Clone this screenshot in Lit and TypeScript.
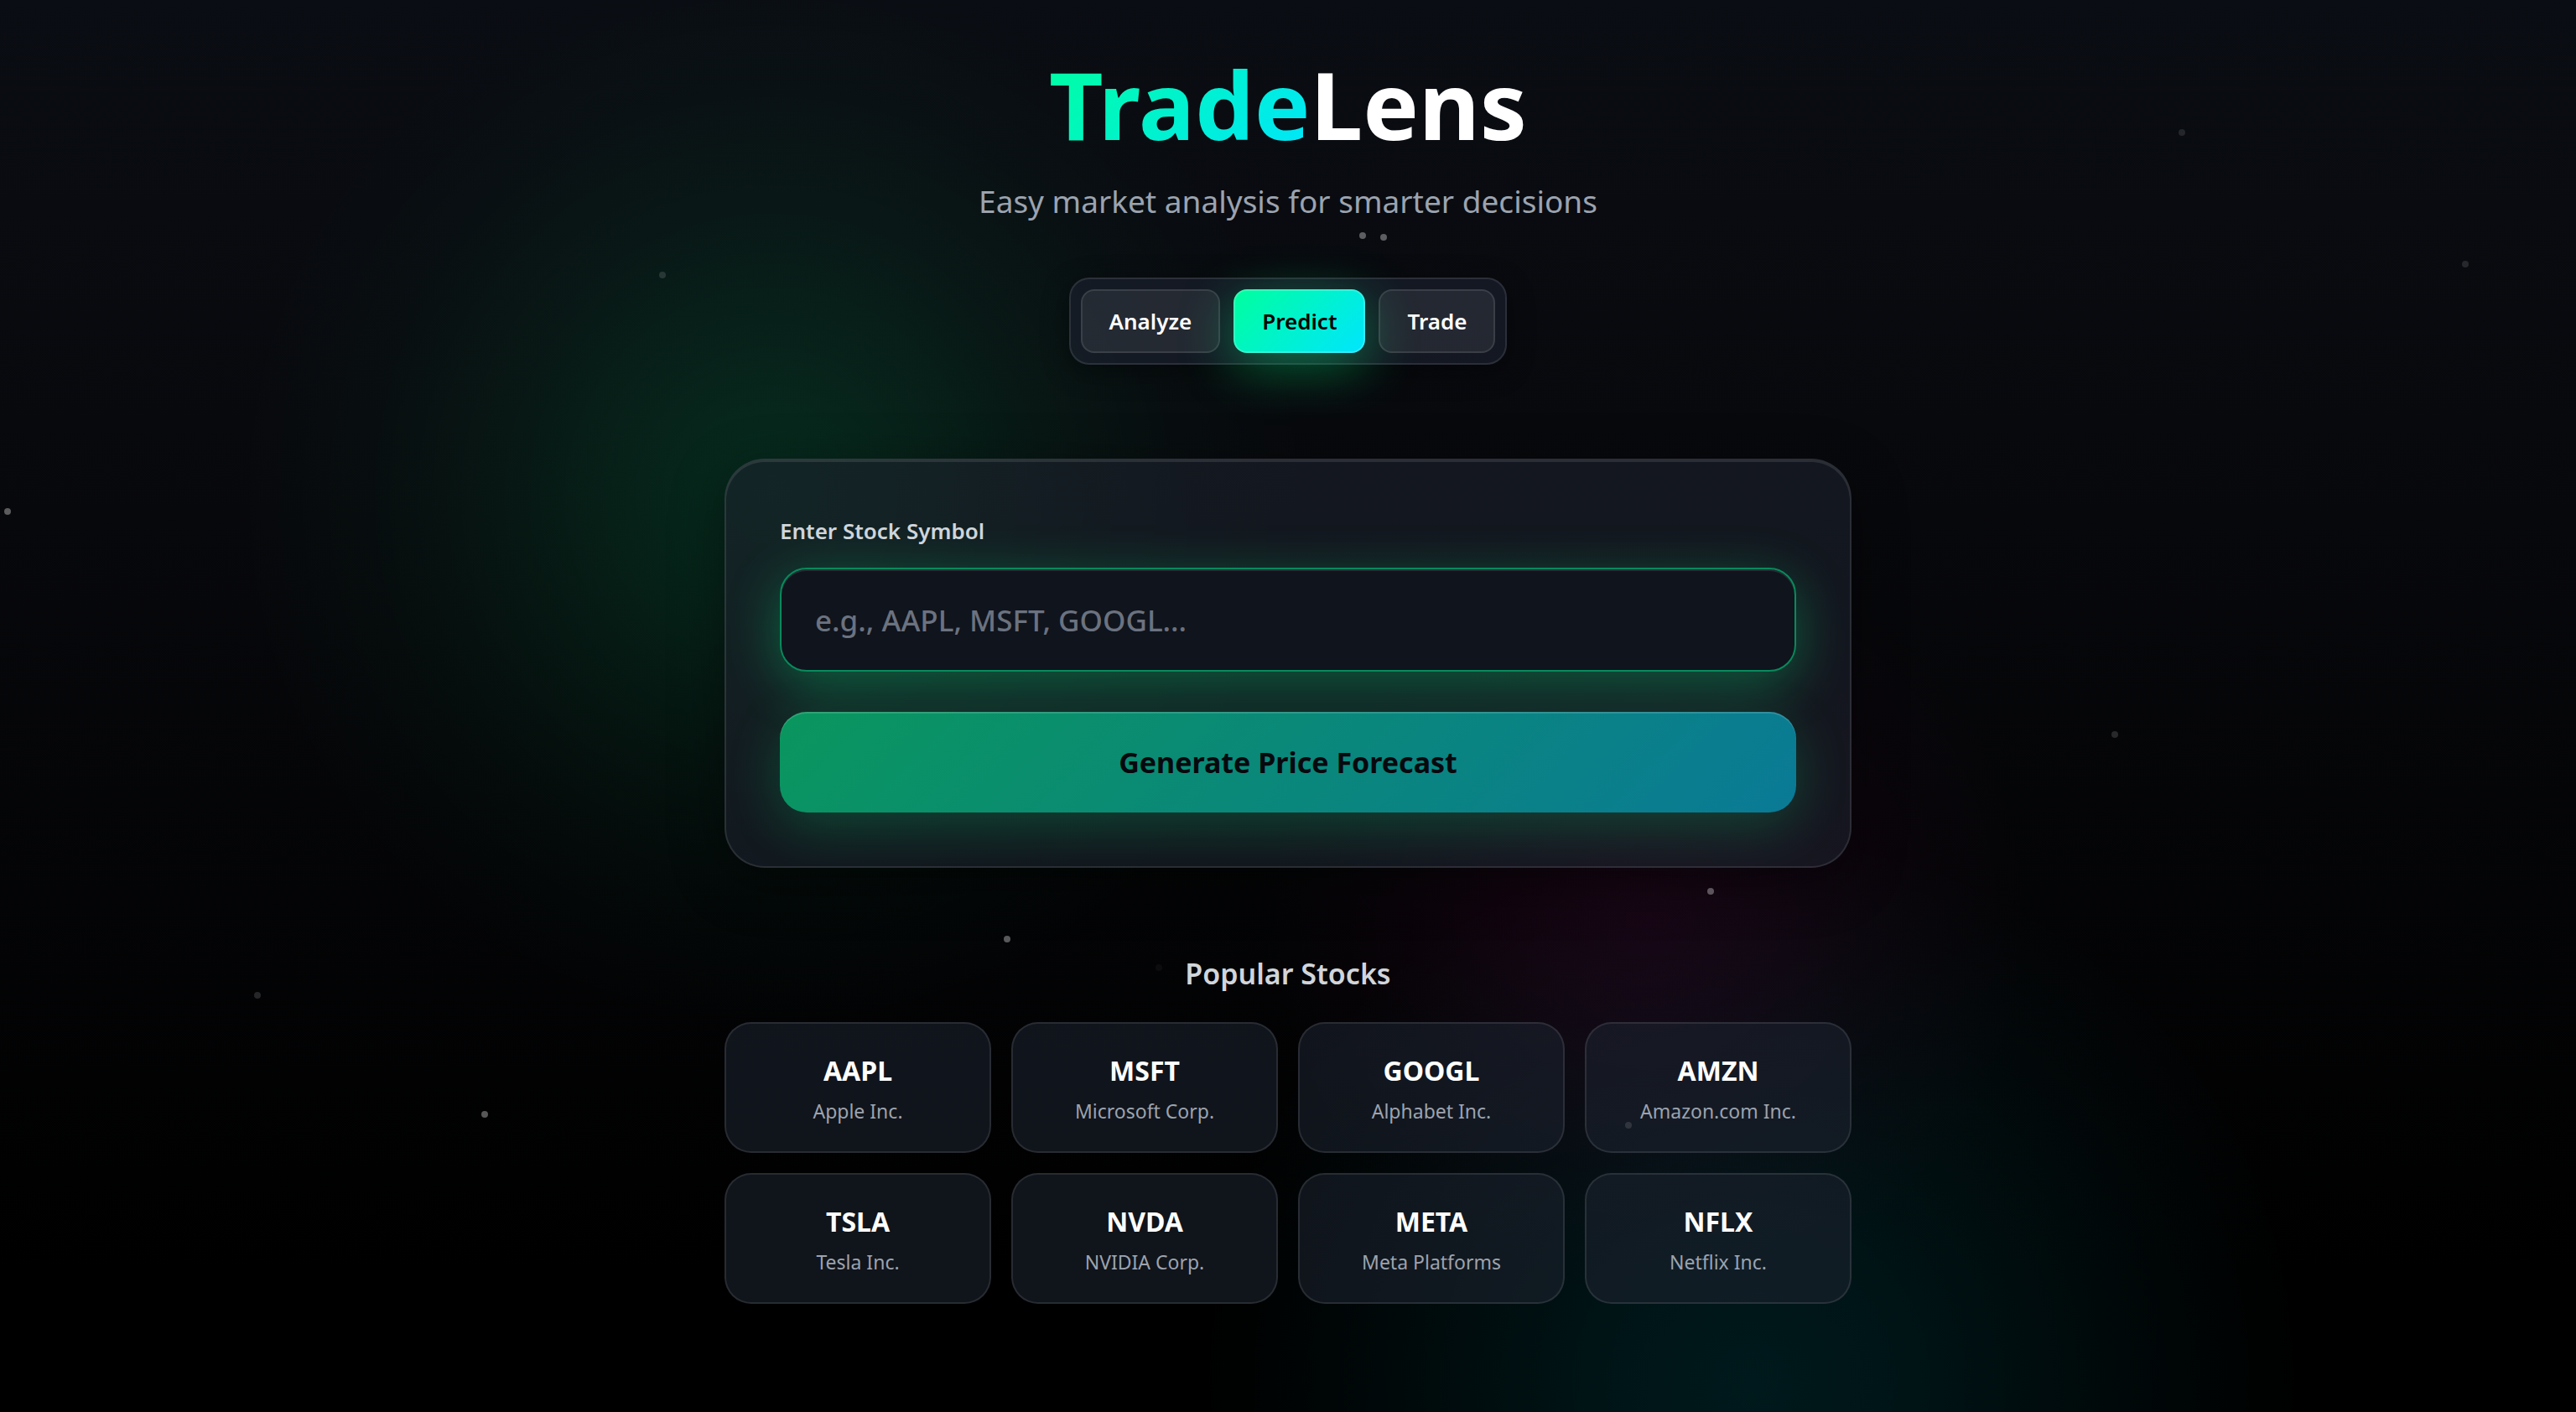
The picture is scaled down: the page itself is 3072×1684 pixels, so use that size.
import { LitElement, html, css } from "lit";
import { customElement, state } from "lit/decorators.js";
import { classMap } from "lit/directives/class-map.js";
import { styleMap } from "lit/directives/style-map.js";

interface Stock {
  symbol: string;
  name: string;
}

/** A floating particle: position in percent of the window, and opacity. */
interface Particle {
  x: number;
  y: number;
  opacity: number;
}

const TABS = ["Analyze", "Predict", "Trade"];

const STOCKS: Stock[] = [
  { symbol: "AAPL", name: "Apple Inc." },
  { symbol: "MSFT", name: "Microsoft Corp." },
  { symbol: "GOOGL", name: "Alphabet Inc." },
  { symbol: "AMZN", name: "Amazon.com Inc." },
  { symbol: "TSLA", name: "Tesla Inc." },
  { symbol: "NVDA", name: "NVIDIA Corp." },
  { symbol: "META", name: "Meta Platforms" },
  { symbol: "NFLX", name: "Netflix Inc." },
];

const PARTICLES: Particle[] = [
  { x: 52.9, y: 16.7, opacity: 0.34 },
  { x: 53.7, y: 16.8, opacity: 0.34 },
  { x: 84.7, y: 9.4, opacity: 0.11 },
  { x: 95.7, y: 18.7, opacity: 0.12 },
  { x: 25.7, y: 19.5, opacity: 0.13 },
  { x: 0.3, y: 36.2, opacity: 0.34 },
  { x: 82.1, y: 52, opacity: 0.14 },
  { x: 66.4, y: 63.1, opacity: 0.32 },
  { x: 39.1, y: 66.5, opacity: 0.34 },
  { x: 45, y: 68.5, opacity: 0.04 },
  { x: 10, y: 70.5, opacity: 0.14 },
  { x: 18.8, y: 78.9, opacity: 0.34 },
  { x: 63.2, y: 79.7, opacity: 0.12 },
];

@customElement("app-root")
export class AppRoot extends LitElement {
  @state() private tab = "Predict";
  @state() private symbol = "";

  static styles = css`
    :host {
      display: block;
      position: relative;
      min-height: 100vh;
      overflow: hidden;
      background: linear-gradient(180deg, #0a0d13 0%, #08090d 30%, #000 90%);
      color: #fff;
      font-family: "Segoe UI", "Noto Sans", "Open Sans", sans-serif;
    }
    *,
    *::before {
      box-sizing: border-box;
    }
    h1,
    h2,
    p {
      margin: 0;
    }
    button,
    input {
      font: inherit;
      color: inherit;
      margin: 0;
    }
    button {
      cursor: pointer;
    }
    .glow {
      position: absolute;
      inset: 0;
      pointer-events: none;
      background:
        radial-gradient(
          circle 640px at 30% 35%,
          rgba(0, 255, 136, 0.14) 0%,
          rgba(0, 255, 136, 0.11) 22%,
          rgba(0, 255, 136, 0.06) 50%,
          rgba(0, 255, 136, 0.02) 76%,
          transparent 100%
        ),
        radial-gradient(
          circle 460px at 64% 65%,
          rgba(255, 0, 170, 0.08) 0%,
          rgba(255, 0, 170, 0.05) 38%,
          rgba(255, 0, 170, 0.02) 68%,
          transparent 100%
        ),
        radial-gradient(
          circle 660px at 68% 98%,
          rgba(0, 229, 255, 0.11) 0%,
          rgba(0, 229, 255, 0.09) 25%,
          rgba(0, 229, 255, 0.05) 55%,
          rgba(0, 229, 255, 0.02) 80%,
          transparent 100%
        );
    }
    .particle {
      position: absolute;
      width: 8px;
      height: 8px;
      margin: -4px;
      border-radius: 50%;
      background: #fff;
      pointer-events: none;
    }
    .page {
      position: relative;
      max-width: 1344px;
      margin: 0 auto;
      padding: 64px 0;
      display: flex;
      flex-direction: column;
      align-items: center;
    }
    .title {
      font-size: 112px;
      line-height: 120px;
      font-weight: 700;
    }
    .accent {
      background: linear-gradient(135deg, #00ff9d, #00e5ff);
      -webkit-background-clip: text;
      background-clip: text;
      color: transparent;
    }
    .subtitle {
      margin-top: 28px;
      font-size: 37px;
      line-height: 56px;
      color: #9ca3af;
    }
    .tabs {
      display: flex;
      gap: 16px;
      margin-top: 63px;
      padding: 12px;
      border: 2px solid rgba(255, 255, 255, 0.1);
      border-radius: 24px;
      background: rgba(28, 34, 48, 0.6);
      box-shadow: 0 8px 32px rgba(0, 0, 0, 0.4);
    }
    .tab {
      padding: 16px 32px;
      border: 2px solid rgba(255, 255, 255, 0.1);
      border-radius: 16px;
      background: rgba(255, 255, 255, 0.07);
      font-size: 26px;
      line-height: 40px;
      font-weight: 600;
    }
    .tab.active {
      background: linear-gradient(135deg, #00ff9d, #00e5ff) border-box;
      border-color: rgba(255, 255, 255, 0.2);
      color: #000;
      box-shadow: 0 16px 64px rgba(0, 255, 136, 0.4);
    }
    .panel {
      width: 100%;
      margin-top: 112px;
      padding: 64px;
      display: flex;
      flex-direction: column;
      border: 2px solid rgba(255, 255, 255, 0.1);
      border-radius: 48px;
      background: rgba(28, 34, 45, 0.6);
      box-shadow:
        0 16px 64px rgba(0, 0, 0, 0.4),
        inset 0 2px 0 rgba(255, 255, 255, 0.1);
    }
    .label {
      font-size: 26px;
      line-height: 40px;
      font-weight: 600;
      color: #d1d5db;
    }
    .field {
      margin-top: 24px;
      height: 124px;
      width: 100%;
      padding: 32px 40px;
      border: 2px solid #088a5c;
      border-radius: 32px;
      background: #10141c;
      outline: none;
      font-size: 35px;
      line-height: 56px;
      font-weight: 500;
      box-shadow:
        0 16px 64px rgba(0, 255, 136, 0.3),
        inset 0 2px 0 rgba(255, 255, 255, 0.1);
    }
    .field::placeholder {
      color: #6b7280;
      opacity: 1;
    }
    .submit {
      margin-top: 48px;
      padding: 32px;
      border: 0;
      border-radius: 32px;
      background: linear-gradient(135deg, #0a965e, #0a7a96);
      color: #07090e;
      font-size: 34px;
      line-height: 56px;
      font-weight: 700;
      box-shadow:
        0 16px 64px rgba(0, 255, 136, 0.2),
        inset 0 2px 0 rgba(255, 255, 255, 0.15);
    }
    .heading {
      margin-top: 98px;
      font-size: 34px;
      line-height: 56px;
      font-weight: 600;
      color: #d1d5db;
    }
    .stocks {
      width: 100%;
      margin-top: 30px;
      display: grid;
      grid-template-columns: repeat(4, 1fr);
      gap: 24px;
    }
    .stock {
      display: flex;
      flex-direction: column;
      align-items: center;
      gap: 8px;
      padding: 32px;
      border: 2px solid rgba(255, 255, 255, 0.1);
      border-radius: 32px;
      background: rgba(27, 33, 45, 0.6);
    }
    .ticker {
      font-size: 32px;
      line-height: 48px;
      font-weight: 700;
    }
    .name {
      font-size: 23px;
      line-height: 32px;
      color: #9ca3af;
    }
  `;

  render() {
    return html`
      <div class="glow"></div>
      <main class="page">
        <h1 class="title"><span class="accent">Trade</span>Lens</h1>
        <p class="subtitle">Easy market analysis for smarter decisions</p>
        <nav class="tabs">
          ${TABS.map(
            (name) => html`<button
              type="button"
              class=${classMap({ tab: true, active: name === this.tab })}
              aria-pressed=${name === this.tab}
              @click=${() => (this.tab = name)}
            >
              ${name}
            </button>`,
          )}
        </nav>
        <form class="panel" @submit=${(e: Event) => e.preventDefault()}>
          <label class="label" for="symbol">Enter Stock Symbol</label>
          <input
            class="field"
            id="symbol"
            type="text"
            autocomplete="off"
            placeholder="e.g., AAPL, MSFT, GOOGL..."
            .value=${this.symbol}
            @input=${(e: InputEvent) =>
              (this.symbol = (e.target as HTMLInputElement).value)}
          />
          <button class="submit" type="submit">Generate Price Forecast</button>
        </form>
        <h2 class="heading">Popular Stocks</h2>
        <div class="stocks">
          ${STOCKS.map(
            (stock) => html`<button
              type="button"
              class="stock"
              @click=${() => (this.symbol = stock.symbol)}
            >
              <span class="ticker">${stock.symbol}</span>
              <span class="name">${stock.name}</span>
            </button>`,
          )}
        </div>
      </main>
      ${PARTICLES.map(
        (p) => html`<span
          class="particle"
          style=${styleMap({
            left: `${p.x}%`,
            top: `${p.y}%`,
            opacity: String(p.opacity),
          })}
        ></span>`,
      )}
    `;
  }
}
